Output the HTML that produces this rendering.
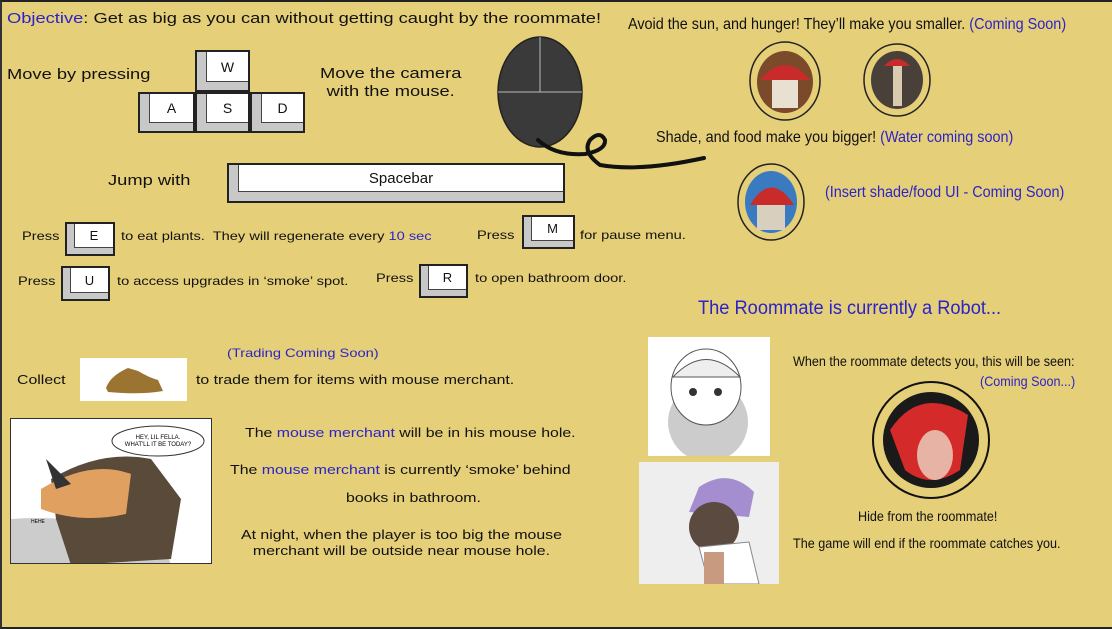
<!DOCTYPE html>
<html><head><meta charset="utf-8"><style>
*{margin:0;padding:0;box-sizing:border-box}
body{width:1112px;height:629px;background:#e5cf78;position:relative;overflow:hidden;font-family:"Liberation Sans",sans-serif;color:#111}
.frame{position:absolute;left:0;top:0;width:1112px;height:629px;border-top:2px solid #222;border-left:2px solid #333;border-bottom:2px solid #222}
.t{position:absolute;white-space:nowrap;font-size:14px;transform-origin:0 0;transform:scaleX(1.22)}
.n{font-size:16px;transform:scaleX(0.9)}
.b{color:#2b23c8}
.key{position:absolute;border:2px solid #222;background:#c8c8c8}
.key .f{position:absolute;left:9px;top:0;right:0;bottom:8px;background:#fff;border-left:1px solid #444;border-bottom:1px solid #444;display:flex;align-items:center;justify-content:center;font-size:14px}
</style></head><body>
<div class="frame"></div>

<div class="t" style="left:7px;top:10px;font-size:15px"><span class="b">Objective</span>: Get as big as you can without getting caught by the roommate!</div>
<div class="t" style="left:7px;top:66px;font-size:15px">Move by pressing</div>
<div class="key" style="left:195px;top:50px;width:55px;height:42px"><div class="f">W</div></div>
<div class="key" style="left:138px;top:92px;width:57px;height:41px"><div class="f">A</div></div>
<div class="key" style="left:195px;top:92px;width:55px;height:41px"><div class="f">S</div></div>
<div class="key" style="left:250px;top:92px;width:55px;height:41px"><div class="f">D</div></div>
<div class="t" style="left:320px;top:65px;font-size:15px;text-align:center;line-height:18px">Move the camera<br>with the mouse.</div>

<svg style="position:absolute;left:0;top:0" width="1112" height="629">
<ellipse cx="540" cy="92" rx="42" ry="55" fill="#3a3a3a" stroke="#222" stroke-width="1.5"/>
<line x1="540" y1="37" x2="540" y2="92" stroke="#bbb" stroke-width="1"/>
<line x1="498" y1="92" x2="582" y2="92" stroke="#bbb" stroke-width="1"/>
<path d="M538 140 Q555 156 585 154 Q606 150 605 140 Q600 130 590 140 Q582 152 600 165 Q640 172 704 158" fill="none" stroke="#111" stroke-width="4" stroke-linecap="round"/>
<ellipse cx="785" cy="81" rx="35" ry="39" fill="none" stroke="#222" stroke-width="1.5"/>
<ellipse cx="785" cy="82" rx="28" ry="31" fill="#7a4a2a"/>
<path d="M760 80 Q785 50 810 80 Z" fill="#c92a2a"/>
<rect x="772" y="80" width="26" height="28" fill="#e8e0d0"/>
<ellipse cx="897" cy="80" rx="33" ry="36" fill="none" stroke="#222" stroke-width="1.5"/>
<ellipse cx="897" cy="80" rx="26" ry="29" fill="#4a403a"/>
<path d="M884 66 Q897 52 910 66 Z" fill="#c92a2a"/>
<rect x="893" y="66" width="9" height="40" fill="#d8cbb0"/>
<ellipse cx="771" cy="202" rx="33" ry="38" fill="none" stroke="#222" stroke-width="1.5"/>
<ellipse cx="771" cy="202" rx="26" ry="31" fill="#3a7ac0"/>
<path d="M750 205 Q771 170 794 205 Z" fill="#c92a2a"/>
<rect x="757" y="205" width="28" height="25" fill="#d8cfbf"/>
<circle cx="931" cy="440" r="58" fill="none" stroke="#111" stroke-width="2"/>
<circle cx="931" cy="440" r="48" fill="#1a1a1a"/>
<path d="M890 430 Q920 385 968 415 L960 470 Q930 490 905 470 Z" fill="#d42a2a"/>
<ellipse cx="935" cy="455" rx="18" ry="25" fill="#e6b3a4"/>
</svg>

<div class="key" style="left:227px;top:163px;width:338px;height:40px"><div class="f" style="bottom:9px;font-size:15px">Spacebar</div></div>
<div class="t" style="left:108px;top:172px;font-size:15px">Jump with</div>

<div class="t" style="left:22px;top:229px;font-size:12px">Press</div>
<div class="key" style="left:65px;top:222px;width:50px;height:34px"><div class="f" style="left:7px;bottom:6px;font-size:13px">E</div></div>
<div class="t" style="left:121px;top:229px;font-size:12px">to eat plants.&nbsp; They will regenerate every <span class="b">10 sec</span></div>
<div class="t" style="left:477px;top:228px;font-size:12px">Press</div>
<div class="key" style="left:522px;top:215px;width:53px;height:34px"><div class="f" style="left:7px;bottom:6px;font-size:13px">M</div></div>
<div class="t" style="left:580px;top:228px;font-size:12px">for pause menu.</div>

<div class="t" style="left:18px;top:274px;font-size:12px">Press</div>
<div class="key" style="left:61px;top:266px;width:49px;height:35px"><div class="f" style="left:7px;bottom:6px;font-size:13px">U</div></div>
<div class="t" style="left:117px;top:274px;font-size:12px">to access upgrades in ‘smoke’ spot.</div>
<div class="t" style="left:376px;top:271px;font-size:12px">Press</div>
<div class="key" style="left:419px;top:264px;width:49px;height:34px"><div class="f" style="left:7px;bottom:6px;font-size:13px">R</div></div>
<div class="t" style="left:475px;top:271px;font-size:12px">to open bathroom door.</div>

<div class="t n" style="left:628px;top:16px">Avoid the sun, and hunger! They’ll make you smaller. <span class="b">(Coming Soon)</span></div>
<div class="t n" style="left:656px;top:129px">Shade, and food make you bigger! <span class="b">(Water coming soon)</span></div>
<div class="t n b" style="left:825px;top:184px">(Insert shade/food UI - Coming Soon)</div>
<div class="t b" style="left:698px;top:298px;font-size:19px;transform:scaleX(0.96)">The Roommate is currently a Robot...</div>

<div class="t b" style="left:227px;top:346px;font-size:12px">(Trading Coming Soon)</div>
<div class="t" style="left:17px;top:372px;font-size:13px">Collect</div>
<div style="position:absolute;left:80px;top:358px;width:107px;height:43px;background:#fff"><svg width="107" height="43"><path d="M26 30 Q30 18 48 10 L58 13 Q70 20 78 22 L83 33 Q60 37 28 34 Z" fill="#9a7430"/></svg></div>
<div class="t" style="left:196px;top:372px;font-size:13px">to trade them for items with mouse merchant.</div>

<div style="position:absolute;left:10px;top:418px;width:202px;height:146px;background:#fff;border:1px solid #333;overflow:hidden">
<svg width="202" height="146"><ellipse cx="147" cy="22" rx="46" ry="15" fill="#fff" stroke="#333"/><text x="147" y="20" font-size="6" text-anchor="middle" font-family="Liberation Sans">HEY, LIL FELLA.</text><text x="147" y="27" font-size="6" text-anchor="middle" font-family="Liberation Sans">WHAT'LL IT BE TODAY?</text>
<path d="M0 130 L0 100 Q60 95 150 115 L160 146 L0 146Z" fill="#ccc"/>
<path d="M40 60 Q90 30 140 40 L170 80 L160 140 L60 146 L45 100 Z" fill="#5a4a3a"/>
<path d="M30 70 Q80 40 120 55 L115 95 Q70 105 30 90 Z" fill="#e0a060"/>
<path d="M35 40 L60 65 L45 70 Z" fill="#333"/>
<text x="20" y="104" font-size="5" font-family="Liberation Sans">HEHE</text></svg></div>

<div class="t" style="left:245px;top:425px;font-size:13px">The <span class="b">mouse merchant</span> will be in his mouse hole.</div>
<div class="t" style="left:230px;top:462px;font-size:13px">The <span class="b">mouse merchant</span> is currently ‘smoke’ behind</div>
<div class="t" style="left:346px;top:490px;font-size:13px">books in bathroom.</div>
<div class="t" style="left:241px;top:527px;font-size:13px;text-align:center;line-height:16px">At night, when the player is too big the mouse<br>merchant will be outside near mouse hole.</div>

<div style="position:absolute;left:648px;top:337px;width:122px;height:119px;background:#fff"><svg width="122" height="119"><circle cx="60" cy="85" r="40" fill="#ccc"/><ellipse cx="58" cy="50" rx="35" ry="38" fill="#fff" stroke="#555"/><path d="M25 40 Q58 5 92 40 Z" fill="#eee" stroke="#555"/><circle cx="45" cy="55" r="4" fill="#333"/><circle cx="70" cy="55" r="4" fill="#333"/></svg></div>
<div style="position:absolute;left:639px;top:462px;width:140px;height:122px;background:#eee"><svg width="140" height="122"><path d="M60 25 Q90 5 115 30 L110 55 L50 50 Z" fill="#a48ecf"/><ellipse cx="75" cy="65" rx="25" ry="25" fill="#5a4a40"/><path d="M60 85 L110 80 L120 122 L70 122 Z" fill="#fff" stroke="#888"/><rect x="65" y="90" width="20" height="32" fill="#c89a80"/></svg></div>

<div class="t n" style="left:793px;top:353px;font-size:14px">When the roommate detects you, this will be seen:</div>
<div class="t n b" style="left:980px;top:373px;font-size:14px">(Coming Soon...)</div>
<div class="t n" style="left:858px;top:508px;font-size:14px">Hide from the roommate!</div>
<div class="t n" style="left:793px;top:535px;font-size:14px">The game will end if the roommate catches you.</div>
</body></html>
